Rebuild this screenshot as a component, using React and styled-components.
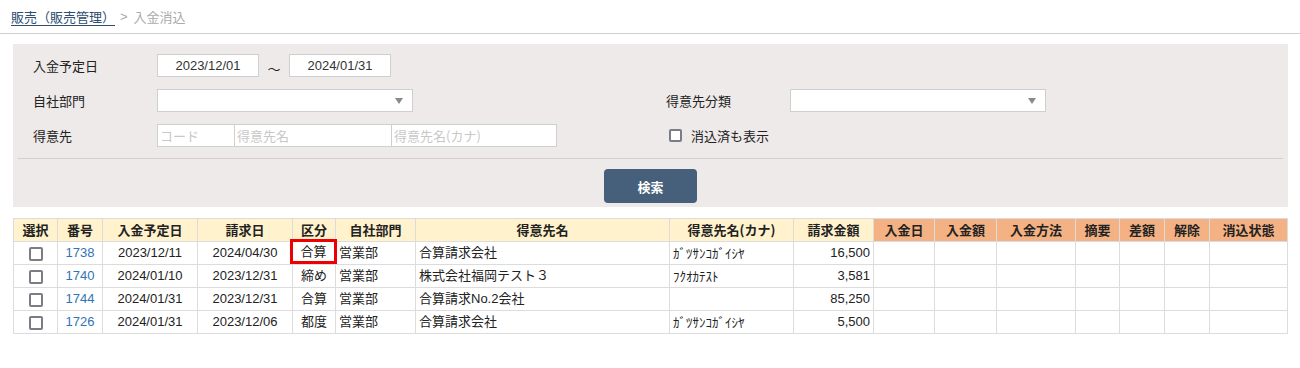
import React from "react";
import styled, { createGlobalStyle } from "styled-components";

const GlobalStyle = createGlobalStyle`
  body {
    margin: 0;
    background: #fff;
    font-family: "Noto Sans CJK JP", "Liberation Sans", sans-serif;
    font-size: 13px;
    color: #222;
  }
`;

const rows = [
  { no: "1738", due: "2023/12/11", bill: "2024/04/30", kind: "合算", dept: "営業部", name: "合算請求会社", kana: "ｶﾞﾂｻﾝｺｶﾞｲｼﾔ", amount: "16,500", mark: true },
  { no: "1740", due: "2024/01/10", bill: "2023/12/31", kind: "締め", dept: "営業部", name: "株式会社福岡テスト３", kana: "ﾌｸｵｶﾃｽﾄ", amount: "3,581" },
  { no: "1744", due: "2024/01/31", bill: "2023/12/31", kind: "合算", dept: "営業部", name: "合算請求No.2会社", kana: "", amount: "85,250" },
  { no: "1726", due: "2024/01/31", bill: "2023/12/06", kind: "都度", dept: "営業部", name: "合算請求会社", kana: "ｶﾞﾂｻﾝｺｶﾞｲｼﾔ", amount: "5,500" },
];

const columns = [
  { label: "選択", w: 44 },
  { label: "番号", w: 45 },
  { label: "入金予定日", w: 95 },
  { label: "請求日", w: 95 },
  { label: "区分", w: 43 },
  { label: "自社部門", w: 80 },
  { label: "得意先名", w: 254 },
  { label: "得意先名(カナ)", w: 124 },
  { label: "請求金額", w: 80 },
  { label: "入金日", w: 61, pay: true },
  { label: "入金額", w: 62, pay: true },
  { label: "入金方法", w: 79, pay: true },
  { label: "摘要", w: 44, pay: true },
  { label: "差額", w: 45, pay: true },
  { label: "解除", w: 45, pay: true },
  { label: "消込状態", w: 78, pay: true },
];

const App = () => {
  return (
    <Page>
      <GlobalStyle />
      <Breadcrumb>
        <CrumbLink>販売（販売管理）</CrumbLink>
        <CrumbSep>&gt;</CrumbSep>
        <CrumbCurrent>入金消込</CrumbCurrent>
      </Breadcrumb>

      <SearchPanel>
        <FormRow>
          <Half>
            <Label>入金予定日</Label>
            <DateInput>2023/12/01</DateInput>
            <Tilde>～</Tilde>
            <DateInput>2024/01/31</DateInput>
          </Half>
        </FormRow>
        <FormRow>
          <Half>
            <Label>自社部門</Label>
            <Select>
              <Caret />
            </Select>
          </Half>
          <Half>
            <Label>得意先分類</Label>
            <Select>
              <Caret />
            </Select>
          </Half>
        </FormRow>
        <FormRow>
          <Half>
            <Label>得意先</Label>
            <TextBox width={78}>コード</TextBox>
            <TextBox width={158}>得意先名</TextBox>
            <TextBox width={166}>得意先名(カナ)</TextBox>
          </Half>
          <Half>
            <CheckLabel>
              <Check size={13} />
              消込済も表示
            </CheckLabel>
          </Half>
        </FormRow>
        <Divider />
        <ButtonRow>
          <SearchButton>検索</SearchButton>
        </ButtonRow>
      </SearchPanel>

      <Table>
        <colgroup>
          {columns.map((c) => (
            <col key={c.label} style={{ width: c.w }} />
          ))}
        </colgroup>
        <thead>
          <tr>
            {columns.map((c) => (
              <Th key={c.label} $pay={c.pay}>
                {c.label}
              </Th>
            ))}
          </tr>
        </thead>
        <tbody>
          {rows.map((r) => (
            <tr key={r.no}>
              <Td $align="center">
                <Check size={14} />
              </Td>
              <Td $align="center">
                <NoLink>{r.no}</NoLink>
              </Td>
              <Td $align="center">{r.due}</Td>
              <Td $align="center">{r.bill}</Td>
              <Td $align="center">
                {r.mark ? <Marked>{r.kind}</Marked> : r.kind}
              </Td>
              <Td>{r.dept}</Td>
              <Td>{r.name}</Td>
              <Td>
                <Kana>{r.kana}</Kana>
              </Td>
              <Td $align="right">{r.amount}</Td>
              <Td />
              <Td />
              <Td />
              <Td />
              <Td />
              <Td />
              <Td />
            </tr>
          ))}
        </tbody>
      </Table>
    </Page>
  );
};

const Page = styled.div`
  padding-bottom: 20px;
`;

const Breadcrumb = styled.div`
  display: flex;
  align-items: center;
  height: 34px;
  padding: 0 0 0 11px;
  border-bottom: 1px solid #cfcfcf;
  box-sizing: border-box;
  font-size: 13px;
`;

const CrumbLink = styled.span`
  color: #2d4e70;
  text-decoration: underline;
  text-underline-offset: 3px;
`;

const CrumbSep = styled.span`
  color: #aaa;
  font-family: "Liberation Sans", sans-serif;
  margin: 0 6px 0 5px;
`;

const CrumbCurrent = styled.span`
  color: #aaa;
`;

const SearchPanel = styled.div`
  margin: 10px 12px 0 13px;
  background: #eeeae9;
  padding: 10px 5px 4px 5px;
`;

const FormRow = styled.div`
  display: flex;
  height: 23px;
  margin-bottom: 12px;
  &:nth-child(3) {
    margin-bottom: 11px;
  }
`;

const Half = styled.div`
  display: flex;
  align-items: center;
  flex: 0 0 633px;
  padding-left: 15px;
  box-sizing: border-box;
`;

const Label = styled.div`
  width: 124px;
  font-size: 13px;
  color: #222;
`;

const DateInput = styled.div`
  width: 102px;
  height: 23px;
  box-sizing: border-box;
  border: 1px solid #cfcfcf;
  background: #fff;
  display: flex;
  align-items: center;
  justify-content: center;
  font-family: "Liberation Sans", sans-serif;
  font-size: 13px;
  color: #333;
`;

const Tilde = styled.span`
  width: 30px;
  text-align: center;
  padding-top: 6px;
  font-size: 13px;
`;

const Select = styled.div`
  position: relative;
  width: 256px;
  height: 23px;
  box-sizing: border-box;
  border: 1px solid #cfcfcf;
  background: #fff;
`;

const Caret = styled.span`
  position: absolute;
  right: 9px;
  top: 8px;
  width: 0;
  height: 0;
  border-left: 4px solid transparent;
  border-right: 4px solid transparent;
  border-top: 6px solid #8a8a8a;
`;

const TextBox = styled.div`
  width: ${(p) => p.width}px;
  height: 23px;
  box-sizing: border-box;
  border: 1px solid #cfcfcf;
  margin-right: -1px;
  background: #fff;
  color: #c8c8c8;
  font-size: 13px;
  line-height: 21px;
  padding-left: 2px;
`;

const CheckLabel = styled.label`
  display: flex;
  align-items: center;
  gap: 9px;
  margin-left: 3px;
  font-size: 13px;
  color: #222;
`;

const Check = styled.span`
  display: inline-block;
  width: ${(p) => p.size}px;
  height: ${(p) => p.size}px;
  box-sizing: border-box;
  border: 2px solid #7c7c86;
  border-radius: 2px;
  background: #fff;
  vertical-align: middle;
`;

const Divider = styled.div`
  height: 1px;
  background: #d2cfce;
`;

const ButtonRow = styled.div`
  display: flex;
  justify-content: center;
  padding: 10px 0 0 0;
`;

const SearchButton = styled.button`
  width: 93px;
  height: 34px;
  border: none;
  border-radius: 4px;
  background: #465f7a;
  color: #fff;
  font-family: "Noto Sans CJK JP", sans-serif;
  font-weight: 700;
  font-size: 13px;
`;

const Table = styled.table`
  margin: 11px 0 0 13px;
  width: 1274px;
  table-layout: fixed;
  border-collapse: collapse;
  font-size: 13px;
`;

const Th = styled.th`
  height: 22px;
  padding: 0;
  line-height: 20px;
  border: 1px solid #dcdcdc;
  background: ${(p) => (p.$pay ? "#f4b183" : "#fff2cc")};
  font-weight: 700;
  color: #222;
  text-align: center;
  white-space: nowrap;
`;

const Td = styled.td`
  height: 22px;
  padding: 0 3px;
  line-height: 20px;
  border: 1px solid #dcdcdc;
  text-align: ${(p) => p.$align || "left"};
  white-space: nowrap;
  color: #222;
  font-family: "Liberation Sans", "Noto Sans CJK JP", sans-serif;
  position: relative;
`;

const NoLink = styled.span`
  color: #2f74b5;
`;

const Marked = styled.span`
  position: absolute;
  inset: -3px -2px 0 -3px;
  border: 3px solid #ee0000;
  display: flex;
  align-items: center;
  justify-content: center;
`;

const Kana = styled.span`
  font-family: "Noto Sans CJK JP", sans-serif;
  font-size: 13px;
`;

export default App;
